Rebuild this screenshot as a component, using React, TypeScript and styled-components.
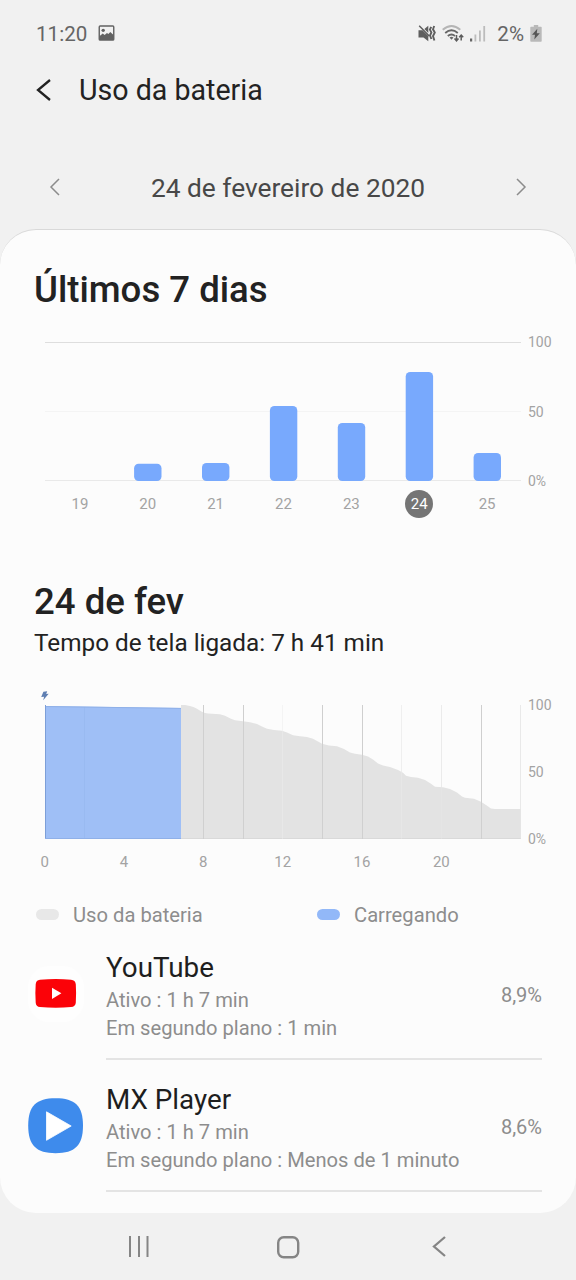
import React from 'react';
import styled, { createGlobalStyle } from 'styled-components';

const GlobalStyle = createGlobalStyle`
  * { box-sizing: border-box; }
  body { margin: 0; background: #f1f1f1; font-family: Roboto, "Liberation Sans", sans-serif; }
  svg { display: block; flex: none; overflow: visible; }
`;

const Screen = styled.div`
  width: 576px;
  height: 1280px;
  display: flex;
  flex-direction: column;
  background: #f1f1f1;
  overflow: hidden;
`;

const StatusBar = styled.header`
  height: 67px;
  padding: 0 34px 0 36px;
  display: flex;
  align-items: center;
  justify-content: space-between;
  color: #656565;
  font-size: 20.6px;
`;

const StatusGroup = styled.div<{ $gap?: number }>`
  display: flex;
  align-items: center;
  gap: ${(p) => p.$gap ?? 0}px;
`;

const Clock = styled.span`
  margin-right: 11px;
`;

const Percent = styled.span`
  margin: 0 6px 0 11px;
`;

const TitleBar = styled.div`
  height: 46px;
  padding-left: 37px;
  display: flex;
  align-items: center;
  gap: 28px;
`;

const Title = styled.h1`
  margin: 0;
  font-size: 28.6px;
  font-weight: 400;
  color: #222;
  line-height: 46px;
`;

const DatePicker = styled.div`
  margin-top: 45px;
  height: 60px;
  padding: 0 50px;
  display: flex;
  align-items: center;
  justify-content: space-between;
  font-size: 26.3px;
  color: #484848;

  svg { margin-bottom: 2px; }
`;

const Card = styled.main`
  margin-top: 11px;
  height: 984px;
  padding: 0 24px 0 34px;
  display: flex;
  flex-direction: column;
  background: #fcfcfc;
  border-top: 1px solid #d9d9d9;
  border-radius: 36px;
`;

const Heading = styled.h2<{ $top: number }>`
  margin: ${(p) => p.$top}px 0 0;
  font-size: 36.6px;
  line-height: 42px;
  font-weight: 500;
  color: #222;
`;

const ScreenTime = styled.p`
  margin: 4px 0 0;
  font-size: 24.3px;
  line-height: 32px;
  color: #222;
`;

const Chart = styled.div<{ $top: number }>`
  margin: ${(p) => p.$top}px 0 0 11px;
  display: flex;
  gap: 7px;
`;

const Scale = styled.div<{ $height: number }>`
  height: ${(p) => p.$height + 16}px;
  margin: -8px 0;
  display: flex;
  flex-direction: column;
  justify-content: space-between;
  font-size: 14px;
  line-height: 16px;
  color: #a3a3a3;
`;

const Days = styled.div`
  width: 475px;
  height: 28px;
  margin: 9px 0 0 12px;
  display: grid;
  grid-template-columns: repeat(7, 1fr);
  place-items: center;
`;

const Day = styled.span<{ $selected?: boolean }>`
  width: 28px;
  height: 28px;
  border-radius: 50%;
  text-align: center;
  font-size: 15px;
  line-height: 29px;
  color: ${(p) => (p.$selected ? '#fff' : '#a3a3a3')};
  background: ${(p) => (p.$selected ? '#757575' : 'transparent')};
`;

const Hours = styled.div`
  width: 476px;
  margin: 13px 0 0 -29px;
  display: grid;
  grid-template-columns: repeat(6, 1fr);
  text-align: center;
  font-size: 15px;
  line-height: 20px;
  color: #a3a3a3;
`;

const Legend = styled.div`
  margin: 31px 0 0 2px;
  display: grid;
  grid-template-columns: 281px 1fr;
`;

const LegendItem = styled.div`
  display: flex;
  align-items: center;
  gap: 14px;
  font-size: 20.2px;
  line-height: 24px;
  color: #8d8d8d;
`;

const Swatch = styled.span<{ $color: string }>`
  width: 23px;
  height: 11px;
  margin-top: -2px;
  border-radius: 6px;
  background: ${(p) => p.$color};
`;

const AppList = styled.ul`
  margin: 1px 10px 0 -6px;
  padding: 0;
  list-style: none;
`;

const AppRow = styled.li`
  height: 132px;
  display: flex;
  align-items: stretch;
`;

const AppIcon = styled.div`
  width: 78px;
  padding-top: 38px;
`;

const AppBody = styled.div`
  flex: 1;
  display: flex;
  align-items: flex-start;
  justify-content: space-between;
  border-bottom: 2px solid #e4e4e4;
`;

const AppText = styled.div`
  padding-top: 21px;
`;

const AppName = styled.div`
  font-size: 27.8px;
  line-height: 37px;
  color: #1e1e1e;
`;

const AppDetail = styled.div`
  font-size: 20.15px;
  line-height: 28px;
  color: #8d8d8d;
`;

const AppShare = styled.div`
  padding-top: 54px;
  font-size: 20px;
  line-height: 26px;
  color: #8d8d8d;
`;

const NavBar = styled.nav`
  flex: 1;
  padding: 0 130px 0 128px;
  display: grid;
  grid-template-columns: 149px 1fr auto;
  align-items: center;
`;

const Chevron = ({ w, h, stroke, color, right }: { w: number; h: number; stroke: number; color: string; right?: boolean }) => (
  <svg width={w} height={h} fill="none" stroke={color} strokeWidth={stroke}>
    <path d={right ? `M1 1 L${w - 1} ${h / 2} L1 ${h - 1}` : `M${w - 1} 1 L1 ${h / 2} L${w - 1} ${h - 1}`} />
  </svg>
);

const PictureIcon = () => (
  <svg width="17" height="16" viewBox="0 0 17 17">
    <rect x="0.8" y="0" width="15.4" height="15" rx="1" fill="none" stroke="#626262" strokeWidth="1.5" />
    <circle cx="5" cy="4.6" r="1.8" fill="#626262" />
    <path d="M1 11 L4.5 8 L6.5 9.5 L9 7.5 L10.5 8.5 L12.5 6.5 L16 9.5 V15 H1Z" fill="#626262" />
  </svg>
);

const VibrateIcon = () => (
  <svg width="18" height="17" viewBox="0 0 18 17">
    <path d="M0.5 5.2 H4.5 L10.3 11 V16.2 L5.5 12.4 H0.5Z M6.4 4 L10.3 0.8 V8Z" fill="#5e5e5e" />
    <path d="M1.2 0.8 L11.2 11" stroke="#5e5e5e" strokeWidth="1.5" />
    <path d="M13.2 1.8 L11.9 4.6 L13.4 7.5 L12 10.5 L13.4 14 M16.2 1 L15 4.3 L16.8 7.5 L15 11 L16.4 15.5" fill="none" stroke="#5e5e5e" strokeWidth="1.9" />
  </svg>
);

const WifiIcon = () => (
  <svg width="22" height="17" viewBox="0 0 22 17" fill="none">
    <path d="M0.7 4.8 Q9.5 -2.8 18.3 4.8" stroke="#b5b5b5" strokeWidth="1.8" />
    <path d="M3.2 8 Q9.5 2.5 15.8 8" stroke="#666" strokeWidth="1.8" />
    <path d="M5.8 11 Q9.5 8 13 11" stroke="#666" strokeWidth="1.8" />
    <path d="M7.5 12.5 Q9.5 11 11.5 12.5 L9.5 14.8Z" fill="#666" />
    <path d="M14.5 10 V15.5 M12.5 13.5 L14.5 15.8 L16.5 13.5 M19.2 15.5 V10.4 M17.2 12.2 L19.2 10 L21.2 12.2" stroke="#5c5c5c" strokeWidth="1.5" />
  </svg>
);

const SignalIcon = () => (
  <svg width="16" height="17" viewBox="0 0 16 17">
    <rect x="0" y="13.5" width="2.2" height="3" fill="#666" />
    <rect x="4.5" y="9.5" width="1.8" height="7" fill="#bcbcbc" />
    <rect x="9" y="5.5" width="1.8" height="11" fill="#bcbcbc" />
    <rect x="13.3" y="1" width="1.8" height="15.5" fill="#bcbcbc" />
  </svg>
);

const BatteryIcon = () => (
  <svg width="12" height="17" viewBox="0 0 12 17">
    <path d="M3.8 0 H8.2 V1.8 H11 Q11.7 1.8 11.7 2.5 V16 Q11.7 16.8 11 16.8 H1 Q0.3 16.8 0.3 16 V2.5 Q0.3 1.8 1 1.8 H3.8Z" fill="#b9b9b9" />
    <path d="M7.3 3.8 L2 9.8 H5 L4.3 14.5 L9.8 8.2 H6.8Z" fill="#555" />
  </svg>
);

const YouTubeIcon = () => (
  <svg width="56" height="56" viewBox="0 0 56 56">
    <rect width="56" height="56" rx="21" fill="#fefefe" />
    <path d="M12 13.8 Q28 12.2 43 13.8 Q47.4 14.2 47.8 18.2 Q48.4 27.2 47.8 36.7 Q47.4 40.6 43 41.1 Q28 42.4 12 41.1 Q8 40.6 7.7 36.7 Q7 27.2 7.7 18.2 Q8 14.2 12 13.8Z" fill="#fb0208" />
    <path d="M24 21.7 L33.4 27.3 L24 33Z" fill="#fff" />
  </svg>
);

const PlayerIcon = () => (
  <svg width="56" height="56" viewBox="0 0 56 56">
    <path d="M27.6 0.3 C47 0.3 55 8 55 27.8 C55 47.5 47 55.2 27.6 55.2 C8.2 55.2 0.2 47.5 0.2 27.8 C0.2 8 8.2 0.3 27.6 0.3Z" fill="#3e8bec" />
    <path d="M18.5 13.8 L43.2 28 L18.5 42.3Z" fill="#fff" stroke="#fff" strokeWidth="0.8" strokeLinejoin="round" />
  </svg>
);

const week = [
  { day: 19, height: 0 },
  { day: 20, height: 17.3 },
  { day: 21, height: 18 },
  { day: 22, height: 75 },
  { day: 23, height: 58 },
  { day: 24, height: 109 },
  { day: 25, height: 28 },
];

const WeekChart = () => (
  <svg width="476" height="139">
    <rect y="0" width="476" height="1" fill="#dedede" />
    <rect y="69" width="476" height="1" fill="#f4f4f4" />
    <rect y="138" width="476" height="1" fill="#e9e9e9" />
    {week.map((d, i) =>
      d.height ? <rect key={d.day} x={21.2 + i * 67.9} y={139 - d.height} width="27.4" height={d.height} rx="4.5" fill="#78a9fd" /> : null,
    )}
  </svg>
);

const level =
  '136,0 140,0 145,1 149,2.2 152,3.7 156,6.2 159,7.8 163,8.5 175,9.3 180,10.8 186,13.8 190,15.2 198,16.2 205,17.2 212,19 217,21.5 222,23.7 229,25 237,25.7 242,27.5 248,30.3 255,31.3 262,32 268,33.8 273,36.5 277,38.8 284,40.4 292,41.3 299,44 305,47.4 310,48.8 317,49.7 323,51.5 328,54.5 333,58.6 338,60.6 345,62 353,65 358,67.8 361,70.7 366,71.9 373,72.7 380,75 386,78.8 390,81.8 398,82.3 405,84 412,87.6 417,91.5 420,92.8 429,93.7 436,96.7 441,100 446,103.5 450,104 476,104';

const lines = [
  { x: 39.5, c: '#8fb1ea' },
  { x: 158.5, c: '#cfcfcf' },
  { x: 198.5, c: '#cfcfcf' },
  { x: 237.5, c: '#f4f4f4' },
  { x: 277.5, c: '#cfcfcf' },
  { x: 317.5, c: '#cfcfcf' },
  { x: 356.5, c: '#efefef' },
  { x: 396.5, c: '#ebebeb' },
  { x: 436.5, c: '#cfcfcf' },
  { x: 475.5, c: '#e9e9e9' },
];

const DayChart = () => (
  <svg width="476" height="134">
    {lines
      .filter((l) => l.x > 136)
      .map((l) => (
        <path key={l.x} d={`M${l.x} 0V134`} stroke={l.c} />
      ))}
    <polygon points={`136,134 ${level} 476,134`} fill="#e3e3e3" />
    <polygon points="0,134 0,1 136,3 136,134" fill="#9fbff6" />
    <path d="M0 1.5 L136 3.4" stroke="#8fb0e8" />
    <path d="M0.5 0V134" stroke="#7d9fd8" />
    <path d="M0 133.5H136" stroke="#8fb0e8" />
    <path d="M136 133.5H476" stroke="#d9d9d9" />
    {lines.map((l) => (
      <path key={l.x} d={`M${l.x} 2V134`} stroke={l.c} opacity={l.c === '#cfcfcf' ? 0.9 : 0.35} />
    ))}
    <path d="M-1.6 -13.3 L2.2 -13.8 L1.2 -11 L3.7 -11.2 L-1.8 -4.8 L-0.9 -8.2 L-3.8 -8.1Z" fill="#5f7fb2" />
  </svg>
);

const apps = [
  { name: 'YouTube', active: 'Ativo : 1 h 7 min', background: 'Em segundo plano : 1 min', share: '8,9%', icon: <YouTubeIcon /> },
  { name: 'MX Player', active: 'Ativo : 1 h 7 min', background: 'Em segundo plano : Menos de 1 minuto', share: '8,6%', icon: <PlayerIcon /> },
];

export default function App() {
  return (
    <>
      <GlobalStyle />
      <Screen>
        <StatusBar>
          <StatusGroup>
            <Clock>11:20</Clock>
            <PictureIcon />
          </StatusGroup>
          <StatusGroup>
            <StatusGroup $gap={6}>
              <VibrateIcon />
              <WifiIcon />
              <SignalIcon />
            </StatusGroup>
            <Percent>2%</Percent>
            <BatteryIcon />
          </StatusGroup>
        </StatusBar>
        <TitleBar>
          <Chevron w={14} h={22} stroke={2.3} color="#222" />
          <Title>Uso da bateria</Title>
        </TitleBar>
        <DatePicker>
          <Chevron w={10} h={18} stroke={1.5} color="#8c8c8c" />
          <span>24 de fevereiro de 2020</span>
          <Chevron w={10} h={18} stroke={1.5} color="#8c8c8c" right />
        </DatePicker>
        <Card>
          <Heading $top={39}>Últimos 7 dias</Heading>
          <Chart $top={31}>
            <WeekChart />
            <Scale $height={139}>
              <span>100</span>
              <span>50</span>
              <span>0%</span>
            </Scale>
          </Chart>
          <Days>
            {week.map((d) => (
              <Day key={d.day} $selected={d.day === 24}>
                {d.day}
              </Day>
            ))}
          </Days>
          <Heading $top={63}>24 de fev</Heading>
          <ScreenTime>Tempo de tela ligada: 7 h 41 min</ScreenTime>
          <Chart $top={46}>
            <DayChart />
            <Scale $height={134}>
              <span>100</span>
              <span>50</span>
              <span>0%</span>
            </Scale>
          </Chart>
          <Hours>
            {[0, 4, 8, 12, 16, 20].map((h) => (
              <span key={h}>{h}</span>
            ))}
          </Hours>
          <Legend>
            <LegendItem>
              <Swatch $color="#e8e8e8" />
              Uso da bateria
            </LegendItem>
            <LegendItem>
              <Swatch $color="#92b8f8" />
              Carregando
            </LegendItem>
          </Legend>
          <AppList>
            {apps.map((a) => (
              <AppRow key={a.name}>
                <AppIcon>{a.icon}</AppIcon>
                <AppBody>
                  <AppText>
                    <AppName>{a.name}</AppName>
                    <AppDetail>{a.active}</AppDetail>
                    <AppDetail>{a.background}</AppDetail>
                  </AppText>
                  <AppShare>{a.share}</AppShare>
                </AppBody>
              </AppRow>
            ))}
          </AppList>
        </Card>
        <NavBar>
          <svg width="21" height="21" stroke="#858585" strokeWidth="2">
            <path d="M2 0V21M11 0V21M19.5 0V21" />
          </svg>
          <svg width="22" height="22" fill="none" stroke="#858585" strokeWidth="2.4">
            <rect x="1.2" y="1.2" width="20" height="20" rx="5.5" />
          </svg>
          <Chevron w={13} h={21} stroke={2.3} color="#858585" />
        </NavBar>
      </Screen>
    </>
  );
}
